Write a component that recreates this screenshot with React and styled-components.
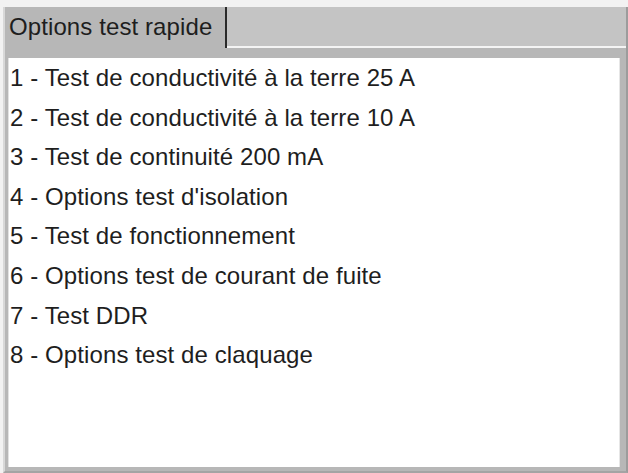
import React from 'react';
import styled, { createGlobalStyle } from 'styled-components';

const GlobalStyle = createGlobalStyle`
    html, body {
        margin: 0;
        padding: 0;
        background: #f2f2f2;
    }
`;

const Screen = styled.div`
    width: 628px;
    height: 473px;
    box-sizing: border-box;
    padding: 7px 0 0 3px;
    display: flex;
    flex-direction: column;
    background: #f2f2f2;
    font-family: 'Liberation Sans', Arial, sans-serif;
    color: #1e1e1e;
`;

const Panel = styled.div`
    flex: 1;
    display: flex;
    flex-direction: column;
    background: #b7b7b7;
    border-left: 2px solid #d8d8d8;
    border-right: 2px solid #9c9c9c;
    border-bottom: 2px solid #a4a4a4;
`;

const TabStrip = styled.div`
    display: flex;
    height: 41px;
`;

const Tab = styled.div`
    width: 222px;
    box-sizing: border-box;
    padding: 6px 0 0 4px;
    font-size: 24px;
    line-height: 1.15;
    letter-spacing: 0.1px;
    white-space: nowrap;
    border-right: 2px solid #2a2a2a;
    background: #b7b7b7;
`;

const Filler = styled.div`
    flex: 1;
    background: #c4c4c4;
    border-bottom: 2px solid #f4f4f4;
`;

const Body = styled.div`
    flex: 1;
    display: flex;
    padding: 10px 6px 4px 3px;
`;

const List = styled.ul`
    flex: 1;
    margin: 0;
    padding: 0 0 0 1px;
    list-style: none;
    background: #fff;
    border-left: 1px solid #e2e2e2;
    border-right: 1px solid #e6e6e6;
    font-size: 24px;
    letter-spacing: 0.1px;
`;

const Item = styled.li`
    line-height: 39.6px;
    white-space: nowrap;
`;

const items = [
    '1 - Test de conductivité à la terre 25 A',
    '2 - Test de conductivité à la terre 10 A',
    '3 - Test de continuité 200 mA',
    "4 - Options test d'isolation",
    '5 - Test de fonctionnement',
    '6 - Options test de courant de fuite',
    '7 - Test DDR',
    '8 - Options test de claquage',
];

export default function App() {
    return (
        <>
            <GlobalStyle />
            <Screen>
                <Panel>
                    <TabStrip>
                        <Tab>Options test rapide</Tab>
                        <Filler />
                    </TabStrip>
                    <Body>
                        <List>
                            {items.map((label) => (
                                <Item key={label}>{label}</Item>
                            ))}
                        </List>
                    </Body>
                </Panel>
            </Screen>
        </>
    );
}
